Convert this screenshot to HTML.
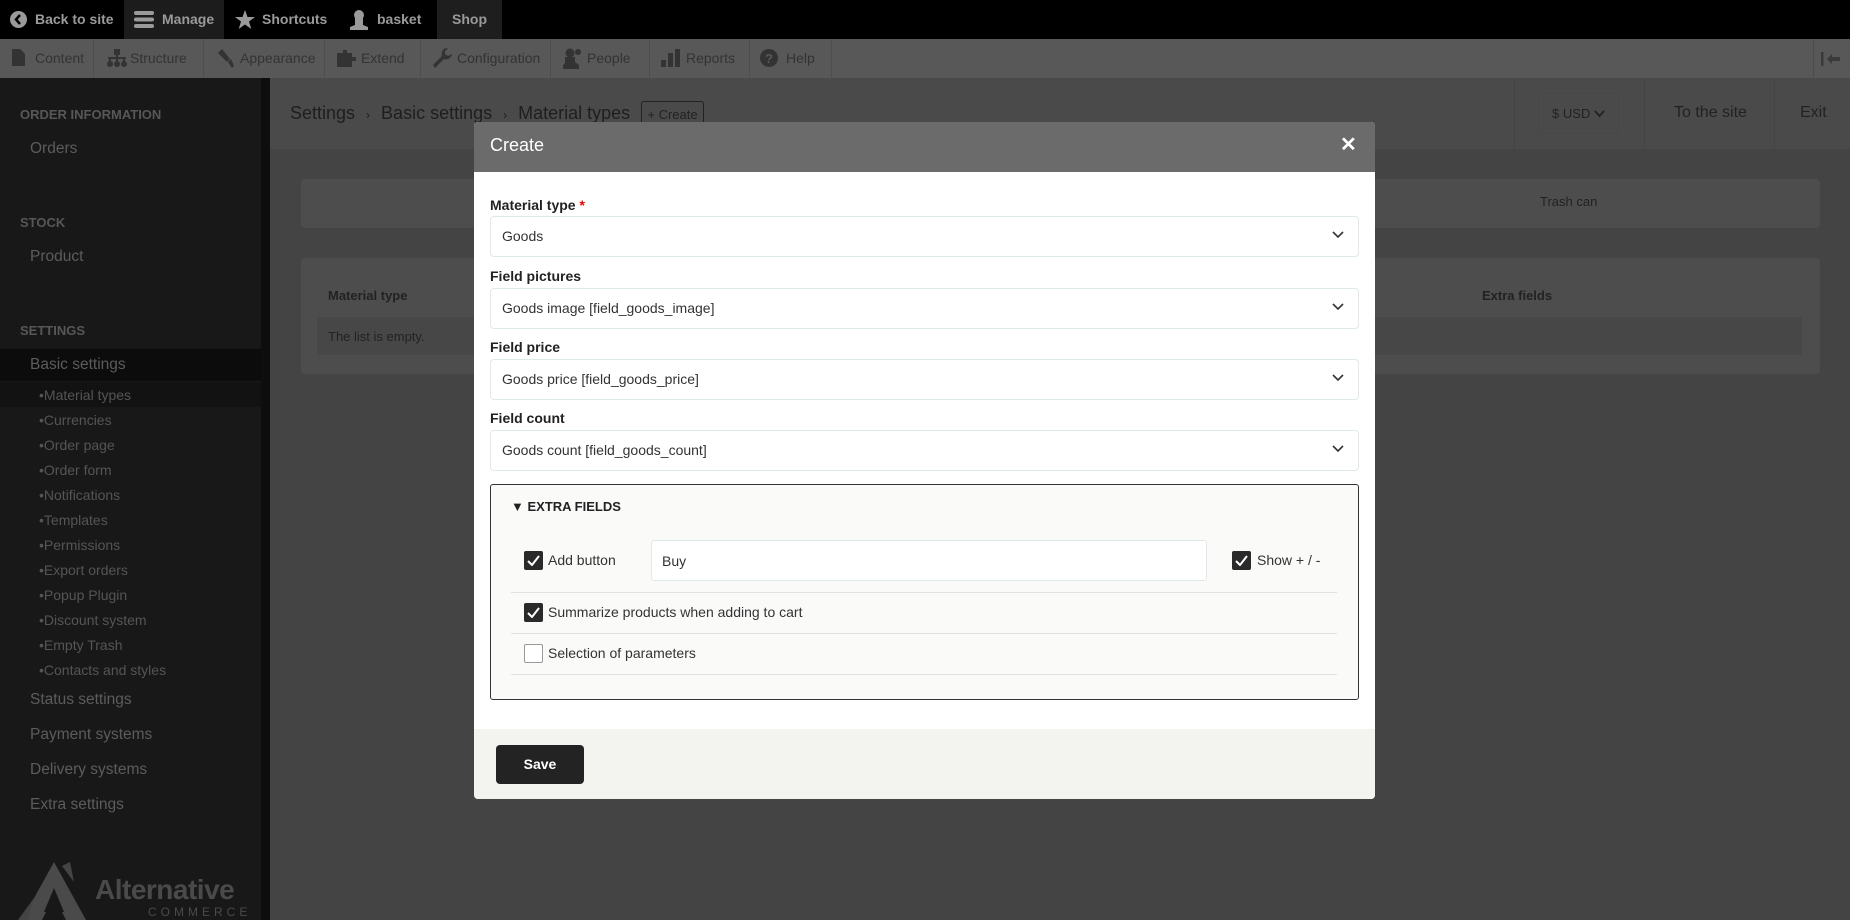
<!DOCTYPE html>
<html><head><meta charset="utf-8"><style>
*{box-sizing:border-box;margin:0;padding:0}
body{width:1850px;height:920px;overflow:hidden;background:#444;font-family:"Liberation Sans",sans-serif;position:relative}
.a{position:absolute;white-space:nowrap}
.tb{left:0;top:0;width:1850px;height:39px;background:#000}
.tbi{top:0;height:39px;line-height:39px;color:#9a9a9a;font-size:14px;font-weight:bold}
.bar2{left:0;top:39px;width:1850px;height:39px;background:#585858;box-shadow:0 2px 3px rgba(0,0,0,.4)}
.b2{top:39px;height:39px;line-height:39px;color:#333;font-size:14px;border-right:1px solid #4e4e4e;padding-left:36px}
.side{left:0;top:78px;width:261px;height:842px;background:#181818}
.sh{color:#575757;font-size:13px;font-weight:bold;left:20px}
.si{color:#5c5c5c;font-size:15.5px;left:30px}
.ss{color:#555;font-size:14px;left:39px}
.lbl{left:490px;font-size:14px;font-weight:bold;color:#222}
.sel{left:490px;width:869px;height:41px;border:1px solid #dfe8ea;border-radius:4px;background:#fff;font-size:14px;color:#333;line-height:39px;padding-left:11px}
.sel svg{position:absolute;right:14px;top:14px}
.cb{width:19px;height:19px;border-radius:2px;background:#2a2a2a}
.cb svg{position:absolute;left:3px;top:4px}
.ct{font-size:14px;color:#333}
.ln{left:511px;width:826px;height:1px;background:#e2e2e0}
</style></head><body>
<div class="a tb"></div>
<div class="a" style="left:124px;top:0;width:100px;height:39px;background:#1c1c1c"></div>
<div class="a" style="left:437px;top:0;width:65px;height:39px;background:#1e1e1e"></div>
<svg class="a" style="left:10px;top:11px" width="17" height="17"><circle cx="8.5" cy="8.5" r="8.5" fill="#9a9a9a"/><path d="M10 4 L6 8.5 L10 13" stroke="#000" stroke-width="2.5" fill="none"/></svg>
<div class="a tbi" style="left:35px">Back to site</div>
<svg class="a" style="left:134px;top:11px" width="20" height="17"><rect y="0" width="20" height="4" rx="2" fill="#9a9a9a"/><rect y="6.5" width="20" height="4" rx="2" fill="#9a9a9a"/><rect y="13" width="20" height="4" rx="2" fill="#9a9a9a"/></svg>
<div class="a tbi" style="left:162px">Manage</div>
<svg class="a" style="left:235px;top:10px" width="20" height="19"><path d="M10 0 L12.5 7 L20 7 L14 11.5 L16.3 19 L10 14.5 L3.7 19 L6 11.5 L0 7 L7.5 7Z" fill="#9a9a9a"/></svg>
<div class="a tbi" style="left:262px">Shortcuts</div>
<svg class="a" style="left:350px;top:9px" width="18" height="21"><circle cx="9" cy="6" r="5" fill="#9a9a9a"/><path d="M5 9 L13 9 L13 16 L18 18 L18 21 L0 21 L0 18 L5 16Z" fill="#9a9a9a"/></svg>
<div class="a tbi" style="left:377px">basket</div>
<div class="a tbi" style="left:452px">Shop</div>

<div class="a bar2"></div>
<div class="a b2" style="left:0;width:94px;padding-left:35px">Content</div>
<div class="a b2" style="left:94px;width:110px">Structure</div>
<div class="a b2" style="left:204px;width:121px">Appearance</div>
<div class="a b2" style="left:325px;width:96px">Extend</div>
<div class="a b2" style="left:421px;width:130px">Configuration</div>
<div class="a b2" style="left:551px;width:99px">People</div>
<div class="a b2" style="left:650px;width:100px">Reports</div>
<div class="a b2" style="left:750px;width:82px">Help</div>
<svg class="a" style="left:12px;top:49px" width="13" height="17"><path d="M0 0 H8 L13 5 V17 H0Z" fill="#333"/></svg>
<svg class="a" style="left:107px;top:49px" width="20" height="18"><rect x="7" y="0" width="6" height="6" fill="#333"/><rect x="1" y="8" width="18" height="2" fill="#333"/><rect x="2" y="8" width="2" height="5" fill="#333"/><rect x="9" y="6" width="2" height="7" fill="#333"/><rect x="16" y="8" width="2" height="5" fill="#333"/><circle cx="3" cy="15" r="3" fill="#333"/><circle cx="10" cy="15" r="3" fill="#333"/><circle cx="17" cy="15" r="3" fill="#333"/></svg>
<svg class="a" style="left:216px;top:49px" width="18" height="19"><path d="M2 4 L6 0 L14 10 L11 13Z M12 13 L15 10 L18 17 L16 19Z" fill="#333"/></svg>
<svg class="a" style="left:337px;top:49px" width="19" height="18"><path d="M0 4 H6 V1 H10 V4 H15 V8 H19 V12 H15 V18 H0Z" fill="#333"/></svg>
<svg class="a" style="left:433px;top:48px" width="19" height="20"><path d="M13 0 A6 6 0 0 0 9 8 L0 17 L2 20 L11 11 A6 6 0 0 0 19 6 L15 8 L12 6 L12 3 L15 1Z" fill="#333"/></svg>
<svg class="a" style="left:563px;top:48px" width="20" height="21"><circle cx="7" cy="5" r="4.5" fill="#333"/><path d="M2 9 H12 V14 L16 17 V21 H0 V17 L2 15Z" fill="#333"/><circle cx="15" cy="4" r="3" fill="#333"/></svg>
<svg class="a" style="left:661px;top:49px" width="20" height="18"><rect y="11" width="5" height="7" fill="#333"/><rect x="7" y="4" width="5" height="14" fill="#333"/><rect x="14" y="0" width="5" height="18" fill="#333"/></svg>
<svg class="a" style="left:760px;top:49px" width="18" height="18"><circle cx="9" cy="9" r="9" fill="#333"/><text x="9" y="14" text-anchor="middle" font-size="13" font-weight="bold" fill="#585858" font-family="Liberation Sans">?</text></svg>
<div class="a" style="left:1813px;top:39px;width:1px;height:39px;background:#4c4c4c"></div>
<svg class="a" style="left:1821px;top:52px" width="20" height="14"><rect x="0" y="0" width="2.5" height="14" fill="#3a3a3a"/><path d="M6 7 L11 2 V5 H19 V9 H11 V12Z" fill="#3a3a3a"/></svg>

<div class="a side"></div>
<div class="a" style="left:261px;top:78px;width:9px;height:842px;background:#0e0e0e"></div>
<div class="a" style="left:0;top:349px;width:261px;height:32px;background:#0c0c0c"></div>
<div class="a" style="left:0;top:382px;width:261px;height:25px;background:#121212"></div>
<div class="a sh" style="top:107px">ORDER INFORMATION</div>
<div class="a si" style="top:140px">Orders</div>
<div class="a sh" style="top:215px">STOCK</div>
<div class="a si" style="top:248px">Product</div>
<div class="a sh" style="top:323px">SETTINGS</div>
<div class="a si" style="top:356px">Basic settings</div>
<div class="a ss" style="top:387px">•Material types</div>
<div class="a ss" style="top:412px">•Currencies</div>
<div class="a ss" style="top:437px">•Order page</div>
<div class="a ss" style="top:462px">•Order form</div>
<div class="a ss" style="top:487px">•Notifications</div>
<div class="a ss" style="top:512px">•Templates</div>
<div class="a ss" style="top:537px">•Permissions</div>
<div class="a ss" style="top:562px">•Export orders</div>
<div class="a ss" style="top:587px">•Popup Plugin</div>
<div class="a ss" style="top:612px">•Discount system</div>
<div class="a ss" style="top:637px">•Empty Trash</div>
<div class="a ss" style="top:662px">•Contacts and styles</div>
<div class="a si" style="top:691px">Status settings</div>
<div class="a si" style="top:726px">Payment systems</div>
<div class="a si" style="top:761px">Delivery systems</div>
<div class="a si" style="top:796px">Extra settings</div>
<svg class="a" style="left:14px;top:862px" width="72" height="58"><path d="M40 0 L72 58 H52 L40 34 L28 58 H8Z" fill="#4a4a4a"/><path d="M40 26 L50 50 H30Z" fill="#181818"/><path d="M48 4 L56 0 L60 20Z M4 58 L20 36 L14 58Z" fill="#444"/></svg>
<div class="a" style="left:95px;top:874px;font-size:28px;font-weight:bold;color:#4a4a4a;letter-spacing:-0.5px">Alternative</div>
<div class="a" style="left:148px;top:905px;font-size:12px;letter-spacing:4px;color:#4a4a4a">COMMERCE</div>

<div class="a" style="left:270px;top:78px;width:1580px;height:71px;background:#4a4a4a"></div>
<div class="a" style="left:290px;top:103px;font-size:18px;color:#1e1e1e">Settings <span style="font-size:12px;margin:0 6px">›</span> Basic settings <span style="font-size:12px;margin:0 6px">›</span> Material types</div>
<div class="a" style="left:641px;top:101px;width:63px;height:25px;border:1px solid #222;border-radius:3px;font-size:13px;color:#222;line-height:25px;text-align:center">+ Create</div>
<div class="a" style="left:1514px;top:78px;width:1px;height:71px;background:#444"></div>
<div class="a" style="left:1644px;top:78px;width:1px;height:71px;background:#444"></div>
<div class="a" style="left:1774px;top:78px;width:1px;height:71px;background:#444"></div>
<div class="a" style="left:1538px;top:93px;width:81px;height:41px;border:1px solid #474747;border-radius:4px;font-size:13px;color:#222;line-height:39px;text-align:center">$ USD <svg width="11" height="8"><path d="M1 1 L5.5 6 L10 1" stroke="#222" stroke-width="1.8" fill="none"/></svg></div>
<div class="a" style="left:1674px;top:104px;font-size:16px;color:#222">To the site</div>
<div class="a" style="left:1800px;top:104px;font-size:16px;color:#222">Exit</div>

<div class="a" style="left:301px;top:179px;width:1519px;height:49px;background:#4d4d4d;border-radius:4px"></div>
<div class="a" style="left:1540px;top:194px;font-size:13px;color:#222">Trash can</div>
<div class="a" style="left:301px;top:258px;width:1519px;height:116px;background:#4d4d4d;border-radius:4px"></div>
<div class="a" style="left:328px;top:288px;font-size:13px;font-weight:bold;color:#222">Material type</div>
<div class="a" style="left:1482px;top:288px;font-size:13px;font-weight:bold;color:#222">Extra fields</div>
<div class="a" style="left:317px;top:317px;width:1485px;height:38px;background:#474747"></div>
<div class="a" style="left:328px;top:329px;font-size:13px;color:#222">The list is empty.</div>

<div class="a" style="left:474px;top:122px;width:901px;height:677px;background:#fff;border-radius:4px;overflow:hidden">
<div style="height:50px;background:#6b6b6b"></div>
<div style="position:absolute;left:0;bottom:0;width:901px;height:70px;background:#f3f3f0"></div>
</div>
<div class="a" style="left:490px;top:135px;font-size:18px;color:#fff">Create</div>
<div class="a" style="left:1340px;top:132px;font-size:20px;font-weight:bold;color:#fff">✕</div>

<div class="a lbl" style="top:197px">Material type <span style="color:#e00">*</span></div>
<div class="a sel" style="top:216px">Goods<svg width="12" height="8"><path d="M1 1 L6 6 L11 1" stroke="#333" stroke-width="1.6" fill="none"/></svg></div>
<div class="a lbl" style="top:268px">Field pictures</div>
<div class="a sel" style="top:288px">Goods image [field_goods_image]<svg width="12" height="8"><path d="M1 1 L6 6 L11 1" stroke="#333" stroke-width="1.6" fill="none"/></svg></div>
<div class="a lbl" style="top:339px">Field price</div>
<div class="a sel" style="top:359px">Goods price [field_goods_price]<svg width="12" height="8"><path d="M1 1 L6 6 L11 1" stroke="#333" stroke-width="1.6" fill="none"/></svg></div>
<div class="a lbl" style="top:410px">Field count</div>
<div class="a sel" style="top:430px">Goods count [field_goods_count]<svg width="12" height="8"><path d="M1 1 L6 6 L11 1" stroke="#333" stroke-width="1.6" fill="none"/></svg></div>

<div class="a" style="left:490px;top:484px;width:869px;height:216px;border:1px solid #333;border-radius:3px;background:#fafaf9"></div>
<div class="a" style="left:511px;top:499px;font-size:13px;font-weight:bold;color:#222">▼ EXTRA FIELDS</div>
<div class="a cb" style="left:524px;top:551px"><svg width="13" height="11"><path d="M1 6 L5 10 L12 1" stroke="#fff" stroke-width="2" fill="none"/></svg></div>
<div class="a ct" style="left:548px;top:552px">Add button</div>
<div class="a" style="left:651px;top:540px;width:556px;height:41px;border:1px solid #dfe8ea;border-radius:3px;background:#fff;font-size:14px;color:#333;line-height:41px;padding-left:10px">Buy</div>
<div class="a cb" style="left:1232px;top:551px"><svg width="13" height="11"><path d="M1 6 L5 10 L12 1" stroke="#fff" stroke-width="2" fill="none"/></svg></div>
<div class="a ct" style="left:1257px;top:552px">Show + / -</div>
<div class="a ln" style="top:592px"></div>
<div class="a cb" style="left:524px;top:603px"><svg width="13" height="11"><path d="M1 6 L5 10 L12 1" stroke="#fff" stroke-width="2" fill="none"/></svg></div>
<div class="a ct" style="left:548px;top:604px">Summarize products when adding to cart</div>
<div class="a ln" style="top:633px"></div>
<div class="a" style="left:524px;top:644px;width:19px;height:19px;border:1px solid #999;border-radius:2px;background:#fff"></div>
<div class="a ct" style="left:548px;top:645px">Selection of parameters</div>
<div class="a ln" style="top:674px"></div>

<div class="a" style="left:496px;top:745px;width:88px;height:39px;background:#232323;border-radius:4px;color:#fff;font-size:14px;font-weight:bold;text-align:center;line-height:39px">Save</div>
</body></html>
